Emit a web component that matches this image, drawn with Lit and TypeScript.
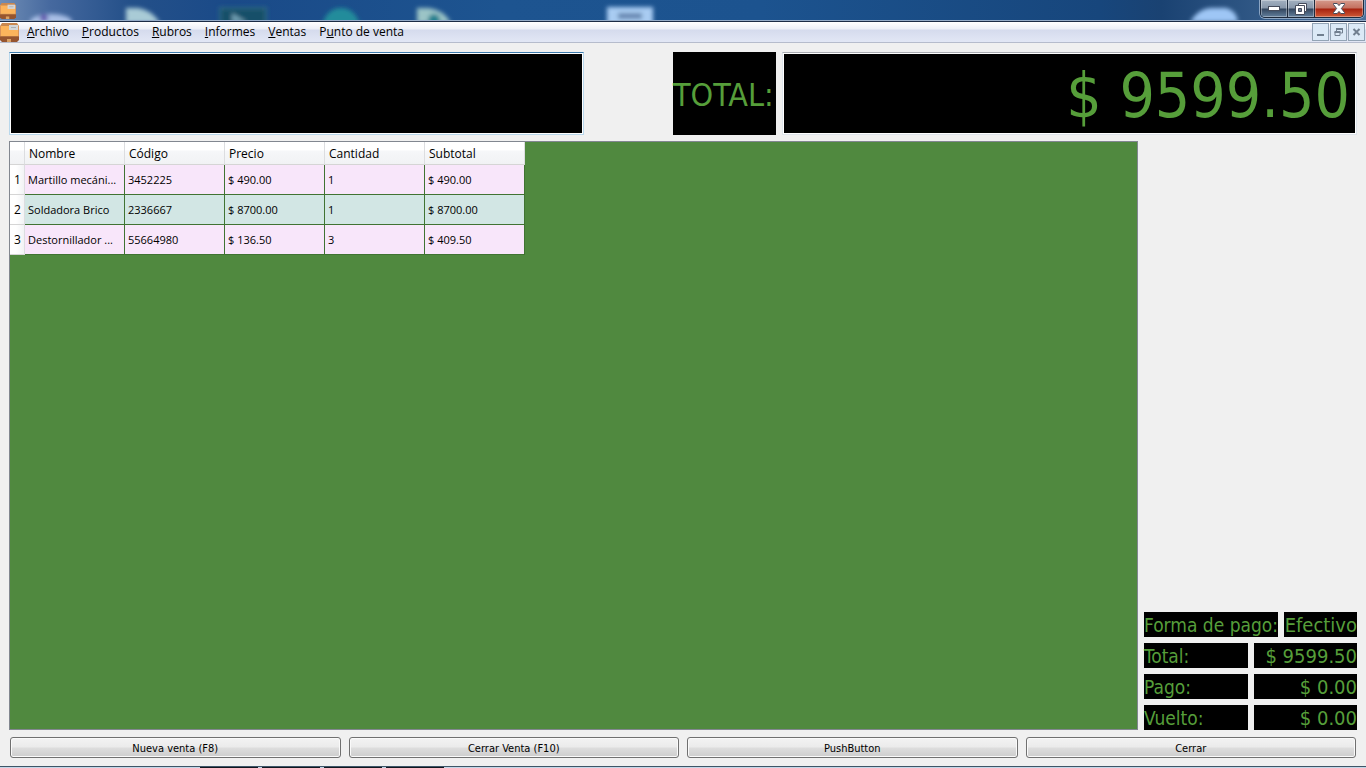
import { LitElement, html, css, svg } from "lit";
import { customElement } from "lit/decorators.js";

const MENUS: [string, string, string][] = [
  ["", "A", "rchivo"],
  ["", "P", "roductos"],
  ["", "R", "ubros"],
  ["", "I", "nformes"],
  ["", "V", "entas"],
  ["P", "u", "nto de venta"],
];

const COLUMNS = ["Nombre", "Código", "Precio", "Cantidad", "Subtotal"];

const ROWS = [
  ["Martillo mecáni...", "3452225", "$ 490.00", "1", "$ 490.00"],
  ["Soldadora Brico", "2336667", "$ 8700.00", "1", "$ 8700.00"],
  ["Destornillador ...", "55664980", "$ 136.50", "3", "$ 409.50"],
];

const TOTALS = [
  ["Total:", "$ 9599.50"],
  ["Pago:", "$ 0.00"],
  ["Vuelto:", "$ 0.00"],
];

const ACTIONS = ["Nueva venta (F8)", "Cerrar Venta (F10)", "PushButton", "Cerrar"];

const box = svg`
  <path d="M2 0h15l2 3v2H0V3z" fill="#c98850" />
  <path d="M0 3h19v10H0z" fill="#fbb45c" />
  <path d="M0 3h1v10H0zM18 3h1v10h-1z" fill="#d8935a" />
  <path d="M0 13h19v4l-2 2H2l-2-2z" fill="#96552f" />
  <path d="M0 13h19v1H0z" fill="#b0703f" />
  <rect x="9" y="2" width="9" height="5" fill="#d4d6d8" />
  <rect x="11" y="4" width="5" height="1" fill="#aab0b5" />
  <rect x="7" y="16" width="4" height="3" fill="#d9a164" />`;

@customElement("app-root")
export class AppRoot extends LitElement {
  static styles = css`
    :host {
      display: flex;
      flex-direction: column;
      height: 100vh;
      overflow: hidden;
      background: #f0f0f0;
      color: #000;
      font: 12px/16px "Open Sans", "Noto Sans", sans-serif;
    }
    * {
      box-sizing: border-box;
    }
    button,
    input {
      font: inherit;
      color: inherit;
      margin: 0;
      padding: 0;
      border: 0;
      border-radius: 0;
    }
    svg {
      display: block;
    }
    .titlebar {
      flex: none;
      height: 22px;
      display: flex;
      justify-content: space-between;
      position: relative;
      overflow: hidden;
      background: linear-gradient(90deg, #6f8db5 0, #46699f 50px, #245089 130px, #1a4a88 230px, #1d5490 500px, #1c538f 760px, #17467c 1100px, #1a4272 85%, #49709b 100%);
      border-bottom: 1px solid #1b2b45;
      box-shadow: inset 0 -1px #94abc7;
    }
    .backdrop {
      position: absolute;
      left: 0;
      top: 0;
      width: 100%;
      height: 20px;
    }
    .app-icon {
      position: relative;
      margin-top: 3px;
    }
    .caption {
      position: relative;
      display: flex;
      height: 18px;
      margin-right: 2px;
      border: 1px solid #1d2a3c;
      border-top: 0;
      border-radius: 0 0 5px 5px;
      overflow: hidden;
      box-shadow: 0 0 0 1px #8ba5c3;
    }
    .caption button {
      width: 27px;
      display: grid;
      place-items: center;
      background: linear-gradient(#a2b0c0 0, #8797aa 8px, #33465e 9px, #63809d 100%);
      border-right: 1px solid #1d2a3c;
      box-shadow: inset 0 0 0 1px #ffffff55;
    }
    .caption .close {
      width: 48px;
      border: 0;
      background: linear-gradient(#d59a8c 0, #c4705f 8px, #a6220f 9px, #cf5a37 100%);
    }
    .menubar {
      flex: none;
      height: 21px;
      display: flex;
      align-items: center;
      background: linear-gradient(#fff 0, #eceff7 7px, #d5dbed 8px, #e2e7f5 100%);
      border-bottom: 1px solid #b6bccc;
    }
    .menubar nav {
      display: flex;
      flex: 1;
      gap: 13px;
      padding-left: 8px;
    }
    .menubar a {
      color: inherit;
      text-decoration: none;
      white-space: nowrap;
    }
    .child-controls {
      display: flex;
      gap: 1px;
      padding-right: 1px;
    }
    .child-controls button {
      width: 17px;
      height: 18px;
      display: grid;
      place-items: center;
      border: 1px solid #93a4b5;
      background: #dbe9f6;
    }
    main {
      flex: 1;
      min-height: 0;
      display: flex;
      flex-direction: column;
      gap: 6px;
      padding: 9px 9px 8px;
    }
    .lcd {
      background: #000;
      color: #569e3a;
      font-family: "DejaVu Sans Condensed", "DejaVu Sans", sans-serif;
      white-space: nowrap;
    }
    .top {
      flex: none;
      display: grid;
      grid-template-columns: 1fr 77px auto 1fr;
      gap: 6px;
      height: 83px;
    }
    .top input {
      width: 100%;
      min-width: 0;
      height: 83px;
      padding: 4px 6px 0;
      font-size: 62px;
      outline: 0;
      border: 1px solid #dfe5ec;
      border-top-color: #abadb3;
      box-shadow: inset 0 0 0 1px #fff;
    }
    .top .code {
      border-color: #b9d8ec;
      border-top-color: #3d7bad;
    }
    .top .amount {
      grid-column: 4;
      text-align: right;
    }
    .top label {
      grid-column: 3;
      display: flex;
      align-items: center;
      width: 103px;
      padding-top: 2px;
      font-size: 32px;
    }
    .middle {
      flex: 1;
      min-height: 0;
      display: grid;
      grid-template-columns: 1fr 213px;
      gap: 6px;
    }
    .sheet {
      background: #50893f;
      border: 1px solid #828790;
      overflow: hidden;
    }
    table {
      table-layout: fixed;
      width: 515px;
      border-collapse: separate;
      border-spacing: 0;
    }
    th,
    td {
      padding: 0 3px;
      text-align: left;
      font-weight: normal;
      white-space: nowrap;
    }
    .num {
      width: 15px;
    }
    thead th {
      height: 23px;
      padding: 2px 4px 0;
      background: linear-gradient(#fff 0, #fff 8px, #f6f7f9 9px, #f1f2f4 100%);
      border-right: 1px solid #dcdde0;
      border-bottom: 1px solid #d5d5d5;
    }
    tbody th {
      padding: 0 0 0 1px;
      text-align: center;
      background: linear-gradient(90deg, #fff 0, #fff 6px, #f2f3f5 100%);
      border-right: 1px solid #dcdde0;
      border-bottom: 1px solid #d5d5d5;
    }
    tbody td {
      height: 30px;
      font-size: 11px;
      background: #f8e6fa;
      border-right: 1px solid #407332;
      border-bottom: 1px solid #407332;
    }
    tbody tr:nth-child(even) td {
      background: #d2e6e4;
    }
    .payment {
      display: flex;
      flex-direction: column;
      justify-content: flex-end;
      gap: 6px;
    }
    .line {
      display: flex;
      gap: 6px;
      height: 25px;
      line-height: 27px;
    }
    .line .lcd {
      flex: 1;
      font-size: 19px;
    }
    .line .value {
      font-size: 20px;
      text-align: right;
    }
    .method .lcd {
      flex: none;
      width: 134px;
    }
    .method .value {
      flex: 1;
    }
    .actions {
      flex: none;
      display: grid;
      grid-template-columns: repeat(4, 1fr);
      gap: 8px;
      padding: 1px 1px 0;
    }
    .actions button {
      height: 21px;
      padding-top: 2px;
      border: 1px solid #707070;
      border-radius: 3px;
      background: linear-gradient(#f3f3f3 0, #ebebeb 9px, #dddddd 10px, #cdcdcd 100%);
      box-shadow: inset 0 0 0 1px #fafafa;
      font: 11px/16px "DejaVu Sans Condensed", "DejaVu Sans", sans-serif;
    }
    .taskbar {
      flex: none;
      display: flex;
      gap: 4px;
      height: 2px;
      padding-left: 200px;
      border-top: 1px solid #3e5567;
      background: #c4d7e8;
    }
    .taskbar span {
      width: 58px;
      background: #10161f;
    }
  `;

  render() {
    return html`
      <header class="titlebar">
        <svg class="backdrop" aria-hidden="true">
          <defs>
            <filter id="soft" x="-30%" y="-30%" width="160%" height="160%">
              <feGaussianBlur stdDeviation="2" />
            </filter>
          </defs>
          <g filter="url(#soft)">
            <ellipse cx="51" cy="22" rx="21" ry="8" fill="#a9bfe6" />
            <circle cx="44" cy="18" r="4" fill="#665fb0" />
            <path d="M126 8h12q14 2 22 15h-34z" fill="#a9cbd6" />
            <rect x="220" y="8" width="46" height="18" fill="#145069" stroke="#2f6a86" stroke-width="2" />
            <path d="M232 13l15 9h-15z" fill="#6f9fb2" />
            <circle cx="341" cy="26" r="18" fill="#228c9b" />
            <path d="M417 8h12q15 2 22 15h-34z" fill="#9bc4c6" />
            <circle cx="434" cy="20" r="6" fill="#24808f" />
            <rect x="607" y="7" width="46" height="18" fill="#a9ccf2" />
            <rect x="618" y="13" width="24" height="6" fill="#6586b0" />
            <path d="M1190 22q8-13 20-14h16q10 2 12 14z" fill="#9ec6f5" />
          </g>
        </svg>
        <svg class="app-icon" width="16" height="16" viewBox="0 0 19 19">${box}</svg>
        <div class="caption">
          <button aria-label="Minimizar">
            <svg width="12" height="5"><rect x="0.5" y="0.5" width="11" height="4" fill="#fff" stroke="#454c5c" /></svg>
          </button>
          <button aria-label="Restaurar">
            <svg width="12" height="12">
              <path d="M3.5.5h8v8h-8z" fill="#fff" stroke="#454c5c" />
              <path d="M.5 2.5h9v9h-9z" fill="#fff" stroke="#454c5c" />
              <path d="M3.5 5.5h3v3h-3z" fill="#738398" stroke="#454c5c" />
            </svg>
          </button>
          <button class="close" aria-label="Cerrar ventana">
            <svg width="12" height="11">
              <path d="M.5.5h3.7L6 2.6 7.8.5h3.7v1L8.4 5.5l3.1 4v1H7.8L6 8.4 4.2 10.5H.5v-1l3.1-4L.5 1.5z" fill="#fff" stroke="#454c5c" />
            </svg>
          </button>
        </div>
      </header>

      <div class="menubar">
        <svg width="19" height="19" viewBox="0 0 19 19">${box}</svg>
        <nav>
          ${MENUS.map(([before, key, after]) => html`<a href="#">${before}<u>${key}</u>${after}</a>`)}
        </nav>
        <div class="child-controls">
          <button aria-label="Minimizar documento">
            <svg width="11" height="10"><path d="M2 7h7v2H2z" fill="#707f8f" /></svg>
          </button>
          <button aria-label="Restaurar documento">
            <svg width="9" height="8">
              <path d="M2.5 3V1H8.5V5H6.5M1 4H6V7.5H1z" fill="none" stroke="#707f8f" />
              <path d="M2 0h7v2H2zM.5 3h6v2h-6z" fill="#707f8f" />
            </svg>
          </button>
          <button aria-label="Cerrar documento">
            <svg width="9" height="8"><path d="M1.5 1l6 6M7.5 1l-6 6" stroke="#707f8f" stroke-width="2" /></svg>
          </button>
        </div>
      </div>

      <main>
        <section class="top">
          <input class="lcd code" type="text" aria-label="Código" />
          <label class="lcd" for="amount">TOTAL:</label>
          <input class="lcd amount" id="amount" type="text" readonly value="$ 9599.50" />
        </section>

        <section class="middle">
          <div class="sheet">
            <table>
              <thead>
                <tr>
                  <th class="num"></th>
                  ${COLUMNS.map((name) => html`<th scope="col">${name}</th>`)}
                </tr>
              </thead>
              <tbody>
                ${ROWS.map(
                  (row, i) => html`<tr>
                    <th scope="row">${i + 1}</th>
                    ${row.map((cell) => html`<td>${cell}</td>`)}
                  </tr>`
                )}
              </tbody>
            </table>
          </div>
          <aside class="payment">
            <div class="line method">
              <span class="lcd">Forma de pago:</span>
              <span class="lcd value">Efectivo</span>
            </div>
            ${TOTALS.map(
              ([name, value]) => html`<div class="line">
                <span class="lcd">${name}</span>
                <span class="lcd value">${value}</span>
              </div>`
            )}
          </aside>
        </section>

        <section class="actions">${ACTIONS.map((name) => html`<button>${name}</button>`)}</section>
      </main>
      <footer class="taskbar"><span></span><span></span><span></span><span></span></footer>
    `;
  }
}
